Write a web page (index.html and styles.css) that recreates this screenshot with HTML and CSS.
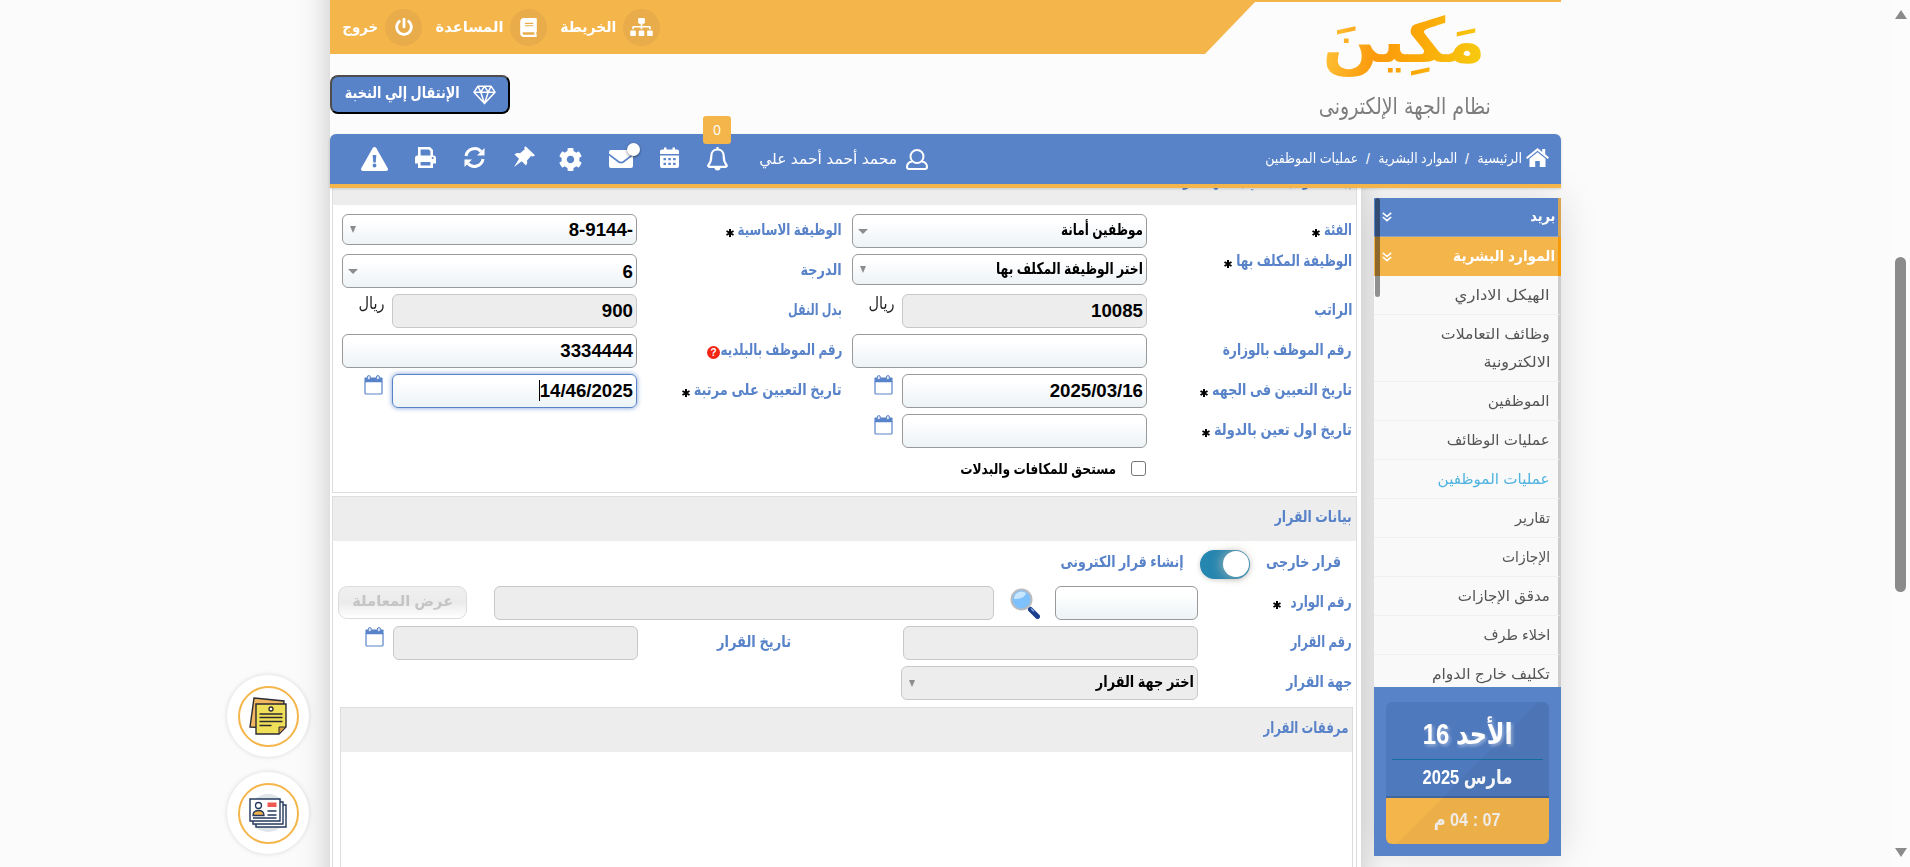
FILE: index.html
```html
<!DOCTYPE html>
<html lang="ar">
<head>
<meta charset="utf-8">
<title>مكين</title>
<link rel="stylesheet" href="styles.css">
</head>
<body>
<svg width="0" height="0" class="defs">
  <defs>
    <symbol id="i-cal" viewBox="0 0 19 21" preserveAspectRatio="none"><path d="M1 7v12q0 1 1 1h15q1 0 1-1V7z" fill="#fff" stroke="#5983c9" stroke-width="1.200"/><path d="M.5 6.800V3.500Q.5 2.500 1.500 2.500H17.500q1 0 1 1v3.300z" fill="#5983c9"/><rect x="3.300" y=".6" width="3" height="4.400" rx="1.500" fill="#dbe6f7" stroke="#5983c9"/><rect x="12.400" y=".6" width="3" height="4.400" rx="1.500" fill="#dbe6f7" stroke="#5983c9"/></symbol>
    <symbol id="i-star" viewBox="0 0 8 8"><path d="M4 0v8M.5 2l7 4M7.500 2l-7 4" stroke="#000" stroke-width="2"/></symbol>
    <symbol id="i-chev" viewBox="0 0 10 10"><path d="M.8.8L5 4.500 9.200.8M.8 5L5 8.700 9.200 5" fill="none" stroke="#fff" stroke-width="1.600"/></symbol>
  </defs>
</svg>
<div class="page" dir="rtl">
  <div class="wrap">
    <header class="header">
      <div class="head-top">
        <div class="logo">
          <div class="logo-name"><span class="fit" data-w="163">مَكِينَ</span></div>
          <div class="logo-sub"><span class="fit" data-w="172">نظام الجهة الإلكترونى</span></div>
        </div>
        <div class="head-left">
          <nav class="topnav">
            <a class="tn"><i class="disc"><svg width="23" height="18" viewBox="0 0 640 512"><path fill="#fff" d="M128 352H32c-17.670 0-32 14.330-32 32v96c0 17.670 14.330 32 32 32h96c17.670 0 32-14.330 32-32v-96c0-17.670-14.330-32-32-32zm-24-80h192v48h48v-48h192v48h48v-57.590c0-21.170-17.230-38.410-38.410-38.410H344v-64h40c17.670 0 32-14.330 32-32V32c0-17.670-14.330-32-32-32H256c-17.670 0-32 14.330-32 32v96c0 17.670 14.330 32 32 32h40v64H94.410C73.230 224 56 241.230 56 262.410V320h48v-48zm264 80h-96c-17.670 0-32 14.330-32 32v96c0 17.670 14.330 32 32 32h96c17.670 0 32-14.330 32-32v-96c0-17.670-14.330-32-32-32zm240 0h-96c-17.670 0-32 14.330-32 32v96c0 17.670 14.330 32 32 32h96c17.670 0 32-14.330 32-32v-96c0-17.670-14.330-32-32-32z"/></svg></i><span class="fit" data-w="56">الخريطة</span></a>
            <a class="tn"><i class="disc"><svg width="17" height="19" viewBox="0 0 448 512"><path fill="#fff" d="M448 360V24c0-13.300-10.700-24-24-24H96C43 0 0 43 0 96v320c0 53 43 96 96 96h328c13.300 0 24-10.700 24-24v-16c0-7.500-3.500-14.300-8.900-18.700-4.200-15.400-4.200-59.300 0-74.700 5.400-4.300 8.900-11.100 8.900-18.600zM128 134c0-3.300 2.700-6 6-6h212c3.300 0 6 2.700 6 6v20c0 3.300-2.700 6-6 6H134c-3.300 0-6-2.700-6-6v-20zm0 64c0-3.300 2.700-6 6-6h212c3.300 0 6 2.700 6 6v20c0 3.300-2.700 6-6 6H134c-3.300 0-6-2.700-6-6v-20zm253.400 250H96c-17.700 0-32-14.300-32-32 0-17.600 14.400-32 32-32h285.400c-1.900 17.100-1.900 46.900 0 64z"/></svg></i><span class="fit" data-w="68">المساعدة</span></a>
            <a class="tn"><i class="disc"><svg width="18" height="18" viewBox="0 0 512 512"><path fill="#fff" d="M400 54.100c63 45 104 118.600 104 201.900 0 136.800-110.800 247.700-247.500 248C120 504.300 8.200 393 8 256.400 7.900 173.100 48.900 99.300 111.800 54.200c11.700-8.300 28-4.800 35 7.700L162.600 90c5.900 10.500 3.100 23.800-6.600 31-41.500 30.800-68 79.600-68 134.900-.1 92.300 74.500 168.100 168 168.100 91.600 0 168.600-74.200 168-169.100-.3-51.800-24.700-101.800-68.100-134-9.700-7.200-12.400-20.500-6.500-30.900l15.800-28.100c7-12.400 23.200-16.100 34.800-7.800zM296 264V24c0-13.300-10.700-24-24-24h-32c-13.300 0-24 10.700-24 24v240c0 13.300 10.700 24 24 24h32c13.300 0 24-10.700 24-24z"/></svg></i><span class="fit" data-w="36">خروج</span></a>
          </nav>
          <div class="elite-row"><div class="elite"><svg width="23" height="20" viewBox="0 0 23 20"><path d="M5 1.200h13l4 6L11.500 18.600 1 7.200zM1 7.200h21M5 1.200l2.800 6 3.700 11.400 3.700-11.400 2.800-6M7.800 7.200l3.700-6 3.700 6" fill="none" stroke="#fff" stroke-width="1.500" stroke-linejoin="round"/></svg><span class="fit" data-w="115">الإنتقال إلي النخبة</span></div></div>
        </div>
      </div>
      <div class="bar" dir="ltr">
        <div class="tools">
          <i><svg width="27" height="24" viewBox="0 0 27 24"><path d="M13.500 0q1.200 0 1.900 1.200L26.600 21q1.200 3-1.600 3H2Q-.8 24 .4 21L11.600 1.200Q12.300 0 13.500 0z" fill="#fff"/><path d="M11.700 8h3.600l-.5 7.500h-2.600z" fill="#5983c9"/><circle cx="13.500" cy="18.500" r="1.900" fill="#5983c9"/></svg></i>
          <i class="raise"><svg width="21" height="21" viewBox="0 0 21 21"><path d="M4.300 9V1.300h10.200l2.200 2.200V9" fill="none" stroke="#fff" stroke-width="2.600"/><path d="M2.500 8.500h16Q21 8.500 21 11v5.500h-3v-2H3v2H0V11Q0 8.500 2.500 8.500z" fill="#fff"/><path d="M4.300 13.700h12.400v6H4.300z" fill="#5983c9" stroke="#fff" stroke-width="2.600"/><circle cx="17.700" cy="11" r="1" fill="#5983c9"/></svg></i>
          <i class="raise"><svg width="21" height="21" viewBox="0 0 21 21"><path d="M2 9A8.700 8.700 0 0 1 17 4.500M19 12A8.700 8.700 0 0 1 4 16.500" fill="none" stroke="#fff" stroke-width="3"/><path d="M20.500 1v7.500H13zM.5 20v-7.500H8z" fill="#fff"/></svg></i>
          <i class="raise"><svg width="22" height="22" viewBox="0 0 22 22"><path d="M12.500.3L22 9.300l-2 1.200-2-.5-4 4.500q1 3-1 5L8.700 15.200 1 21l5-8.200L1.500 8.500q2-2 5.500-1.200L11.800 3.200l-.6-1.400z" fill="#fff"/></svg></i>
          <i><svg width="23" height="23" viewBox="8 8 496 496"><path fill="#fff" d="M487.400 315.700l-42.600-24.600c4.300-23.200 4.300-47 0-70.200l42.600-24.600c4.900-2.800 7.100-8.600 5.500-14-11.100-35.600-30-67.800-54.700-94.600-3.800-4.100-10-5.100-14.800-2.300L380.800 110c-17.900-15.400-38.500-27.300-60.800-35.100V25.800c0-5.600-3.900-10.500-9.400-11.700-36.700-8.200-74.300-7.800-109.200 0-5.500 1.200-9.400 6.100-9.400 11.700V75c-22.200 7.900-42.800 19.800-60.800 35.100L88.700 85.500c-4.900-2.800-11-1.900-14.800 2.300-24.700 26.700-43.600 58.900-54.700 94.600-1.700 5.400.6 11.200 5.500 14L67.300 221c-4.300 23.200-4.300 47 0 70.200l-42.600 24.600c-4.900 2.800-7.100 8.600-5.500 14 11.100 35.600 30 67.800 54.700 94.600 3.800 4.100 10 5.100 14.800 2.300l42.600-24.600c17.900 15.400 38.500 27.300 60.800 35.100v49.200c0 5.600 3.900 10.500 9.400 11.700 36.700 8.200 74.300 7.800 109.200 0 5.500-1.200 9.400-6.100 9.400-11.700v-49.200c22.200-7.900 42.800-19.800 60.800-35.100l42.600 24.600c4.900 2.800 11 1.900 14.800-2.300 24.700-26.700 43.600-58.900 54.700-94.600 1.500-5.500-.7-11.300-5.600-14.100zM256 336c-44.100 0-80-35.900-80-80s35.900-80 80-80 80 35.900 80 80-35.900 80-80 80z"/></svg></i>
          <i class="mail"><svg width="24" height="18" viewBox="0 0 24 18"><path d="M0 2Q0 0 2 0h20q2 0 2 2v1.500L14 11q-2 1.500-4 0L0 3.500zM0 5.500L9 12.500q3 2 6 0L24 5.500V16q0 2-2 2H2q-2 0-2-2z" fill="#fff"/></svg><b class="dot"></b></i>
          <i class="raise"><svg width="19" height="21" viewBox="0 0 19 21"><path d="M0 7V4.500Q0 2.500 2 2.500h2V.5h2.500v2h6v-2H15v2h2q2 0 2 2V7zM0 8.500h19V19q0 2-2 2H2q-2 0-2-2z" fill="#fff"/><path d="M3.500 11h2.500v2.300H3.500zm4.800 0h2.500v2.300H8.300zm4.800 0h2.500v2.300h-2.500zM3.500 15.700h2.500V18H3.500zm4.800 0h2.500V18H8.300zm4.800 0h2.500V18h-2.500z" fill="#5983c9"/></svg></i>
          <i class="bell"><svg width="21" height="24" viewBox="0 0 21 24"><path d="M10.500 2.500c-4 0-6.200 3-6.200 6.500 0 6-1.500 7.300-2.800 9-.6 1 0 1.800.8 1.800h16.400c.8 0 1.400-.8.8-1.800-1.300-1.700-2.800-3-2.800-9 0-3.500-2.200-6.500-6.200-6.500zM10.500 0v2.500" fill="none" stroke="#fff" stroke-width="2.200"/><path d="M7.500 20.500a3 3 0 0 0 6 0z" fill="#fff"/></svg><b class="count">0</b></i>
        </div>
        <div class="user"><span class="fit" dir="rtl" data-w="138">محمد أحمد أحمد علي</span><svg width="22" height="21" viewBox="0 0 22 21"><circle cx="11" cy="7.500" r="6.500" fill="none" stroke="#fff" stroke-width="2"/><path d="M6 12.500Q1 13.500 1 18q0 2 2 2h16q2 0 2-2 0-4.500-5-5.500" fill="none" stroke="#fff" stroke-width="2"/></svg></div>
        <div class="crumbs" dir="rtl"><svg width="23" height="19" viewBox="0 0 23 19"><path d="M11.500 0l4.700 3.900V1h3v5.300L23 9.500l-1.300 1.500L11.500 2.700 1.300 11 0 9.500z" fill="#fff"/><path d="M3.500 10.800l8-6.500 8 6.500V19h-5.700v-6H9.200v6H3.500z" fill="#fff"/></svg><span class="fit" data-w="45">الرئيسية</span><u>/</u><span class="fit" data-w="79">الموارد البشرية</span><u>/</u><span class="fit" data-w="93">عمليات الموظفين</span></div>
      </div>
    </header>

    <div class="body">
      <aside class="side">
        <div class="menu">
          <div class="group mail-g"><span class="fit" data-w="25">بريد</span><svg width="10" height="10"><use href="#i-chev"/></svg></div>
          <div class="group hr-g"><span class="fit" data-w="102">الموارد البشرية</span><svg width="10" height="10"><use href="#i-chev"/></svg></div>
          <div class="item"><span class="fit" data-w="95">الهيكل الاداري</span></div>
          <div class="item"><span class="fit" data-w="109">وظائف التعاملات</span><br><span class="fit" data-w="67">الالكترونية</span></div>
          <div class="item"><span class="fit" data-w="62">الموظفين</span></div>
          <div class="item"><span class="fit" data-w="103">عمليات الوظائف</span></div>
          <div class="item on"><span class="fit" data-w="112">عمليات الموظفين</span></div>
          <div class="item"><span class="fit" data-w="35">تقارير</span></div>
          <div class="item"><span class="fit" data-w="48">الإجازات</span></div>
          <div class="item"><span class="fit" data-w="92">مدقق الإجازات</span></div>
          <div class="item"><span class="fit" data-w="67">اخلاء طرف</span></div>
          <div class="item"><span class="fit" data-w="118">تكليف خارج الدوام</span></div>
          <b class="menu-thumb"></b>
        </div>
        <div class="clock">
          <div class="card">
            <div class="day"><span class="fit" data-w="90">الأحد 16</span></div>
            <div class="month"><span class="fit" data-w="90">مارس 2025</span></div>
            <div class="time"><span class="fit" data-w="67">07 : 04 م</span></div>
          </div>
        </div>
      </aside>

      <main class="main">
        <section class="panel first">
          <h2 class="title"><span class="fit" data-w="192">بيانات الوظيفة التي يشغلها الموظف</span></h2>
          <div class="form">
            <label><span class="fit" data-w="28">الفئة</span><svg class="star"><use href="#i-star"/></svg></label>
            <div class="ctl"><div class="box sel wide"><span class="fit" data-w="82">موظفين أمانة</span></div></div>
            <label><span class="fit" data-w="104">الوظيفة الاساسية</span><svg class="star"><use href="#i-star"/></svg></label>
            <div class="ctl"><div class="box sel tall short"><span dir="ltr">8-9144-</span></div></div>

            <label class="up"><span class="fit" data-w="116">الوظيفة المكلف بها</span><svg class="star"><use href="#i-star"/></svg></label>
            <div class="ctl"><div class="box sel tall short"><span class="fit" data-w="147">اختر الوظيفة المكلف بها</span></div></div>
            <label><span class="fit" data-w="41">الدرجة</span></label>
            <div class="ctl"><div class="box sel wide"><span>6</span></div></div>

            <label><span class="fit" data-w="38">الراتب</span></label>
            <div class="ctl"><div class="box off"><span>10085</span></div><div class="unit"><span class="fit" data-w="26">ريال</span></div></div>
            <label><span class="fit" data-w="54">بدل النقل</span></label>
            <div class="ctl"><div class="box off"><span>900</span></div><div class="unit"><span class="fit" data-w="26">ريال</span></div></div>

            <label><span class="fit" data-w="129">رقم الموظف بالوزارة</span></label>
            <div class="ctl"><div class="box"></div></div>
            <label><span class="fit" data-w="122">رقم الموظف بالبلديه</span><b class="help">?</b></label>
            <div class="ctl"><div class="box"><span>3334444</span></div></div>

            <label><span class="fit" data-w="140">تاريخ التعيين فى الجهه</span><svg class="star"><use href="#i-star"/></svg></label>
            <div class="ctl"><div class="box"><span>2025/03/16</span></div><svg class="cal"><use href="#i-cal"/></svg></div>
            <label><span class="fit" data-w="148">تاريخ التعيين على مرتبة</span><svg class="star"><use href="#i-star"/></svg></label>
            <div class="ctl"><div class="box focus"><span class="caret" dir="ltr">14/46/2025</span></div><svg class="cal"><use href="#i-cal"/></svg></div>

            <label><span class="fit" data-w="138">تاريخ اول تعين بالدولة</span><svg class="star"><use href="#i-star"/></svg></label>
            <div class="ctl"><div class="box"></div><svg class="cal"><use href="#i-cal"/></svg></div>
            <label></label><div class="ctl"></div>

            <label></label>
            <div class="ctl check"><b class="cb"></b><span class="fit" data-w="156">مستحق للمكافات والبدلات</span></div>
          </div>
        </section>

        <section class="panel second">
          <h2 class="title"><span class="fit" data-w="77">بيانات القرار</span></h2>
          <div class="switch-row"><span class="fit" data-w="75">قرار خارجى</span><b class="switch"><b></b></b><span class="fit" data-w="123">إنشاء قرار الكترونى</span></div>
          <div class="row">
            <label><span class="fit" data-w="61">رقم الوارد</span><svg class="star far"><use href="#i-star"/></svg></label>
            <div class="box w143"></div>
            <svg class="mag" width="30" height="31" viewBox="0 0 30 31"><path d="M18.500 19.500l3 3" stroke="#9a9a9a" stroke-width="3"/><path d="M20.500 21.500l7 7" stroke="#1c3f8f" stroke-width="5" stroke-linecap="round"/><path d="M21 20.500l3 3" stroke="#7fa3dd" stroke-width="1.500"/><circle cx="11.500" cy="11.500" r="10" fill="#7dc0fb" stroke="#b9bcc0" stroke-width="2"/><path d="M4 11a7.500 7.500 0 0 1 12-6Q15 11 4 11z" fill="#c9e6ff"/></svg>
            <div class="box off w500"></div>
            <div class="view"><span class="fit" data-w="101">عرض المعاملة</span></div>
          </div>
          <div class="row">
            <label><span class="fit" data-w="61">رقم القرار</span></label>
            <div class="box off w295"></div>
            <label class="mid"><span class="fit" data-w="74">تاريخ القرار</span></label>
            <div class="box off w245"></div>
            <svg class="cal"><use href="#i-cal"/></svg>
          </div>
          <div class="row">
            <label><span class="fit" data-w="66">جهة القرار</span></label>
            <div class="box off sel tall w297"><span class="fit" data-w="98">اختر جهة القرار</span></div>
          </div>
          <section class="panel third">
            <h2 class="title"><span class="fit" data-w="85">مرفقات القرار</span></h2>
          </section>
        </section>
      </main>
    </div>
  </div>
</div>
<div class="scroll"><i class="arrow up-a"></i><i class="thumb"></i><i class="arrow down-a"></i></div>
<div class="floats">
  <div class="fab"><div class="ring"><svg width="38" height="38" viewBox="0 0 38 38"><path d="M5 1l30 3-3 28-31-2z" fill="#f2b75f" stroke="#2b2b33" stroke-width="1.400"/><path d="M7 7h30v23l-7 7H7z" fill="#f0df58" stroke="#2b2b33" stroke-width="1.400"/><path d="M37 30h-7v7z" fill="#d79a3c" stroke="#2b2b33"/><path d="M10.500 17h23M10.500 20.500h23M10.500 24.500h23M10.500 28.500h12" stroke="#2b2b33" stroke-width="1.400"/><circle cx="22" cy="12" r="2" fill="#fff" stroke="#2b2b33" stroke-width="1.300"/></svg></div></div>
  <div class="fab"><div class="ring"><svg width="38" height="38" viewBox="0 0 38 38"><circle cx="19" cy="19" r="19" fill="#dfe5e8"/><path d="M7 11h30v22H7z" fill="#fff" stroke="#24395c" stroke-width="1.400"/><path d="M4 8h30v22H4z" fill="#fff" stroke="#24395c" stroke-width="1.400"/><path d="M1 5h30v22H1z" fill="#fff" stroke="#24395c" stroke-width="1.400"/><circle cx="9.500" cy="11.500" r="3" fill="#fff" stroke="#24395c" stroke-width="1.300"/><path d="M4 21.500q0-5 5.500-5t5.500 5z" fill="#f0b14b" stroke="#24395c" stroke-width="1.300"/><path d="M18.500 8.500h9v4.500h-9z" fill="#ee5a52"/><path d="M18.500 17h9M18.500 21h9M4 24h23.500" stroke="#24395c" stroke-width="1.300"/></svg></div></div>
</div>
<script src="fit.js"></script>
</body>
</html>
```
FILE: styles.css
```css
* { box-sizing: border-box; }
body {
  margin: 0;
  width: 1910px;
  height: 867px;
  overflow: hidden;
  display: flex;
  background: #fbfbfb;
  font-family: "Liberation Sans", "DejaVu Sans", sans-serif;
}
i, u, a { font-style: normal; text-decoration: none; }
svg { display: block; flex: none; }
.defs { position: absolute; }
.fit { display: inline-block; white-space: nowrap; transform-origin: right center; flex: none; }

.page { width: 1891px; height: 867px; overflow: hidden; flex: none; }
.wrap { width: 1231px; margin: 0 auto; }

/* header */
.header { position: relative; z-index: 3; height: 188px; background: #fcfcfc; }
.head-top { display: flex; height: 134px; }
.logo { width: 356px; border-top: 2px solid #f4b54b; padding-right: 70px; flex: none; }
.logo-name { height: 84px; line-height: 78px; padding-right: 5px; font-family: "DejaVu Sans", sans-serif; font-size: 62px; font-weight: bold; }
.logo-name .fit { background: linear-gradient(100deg, #ffc83d, #fb9a0c 35%, #fba908 60%, #f6cf10); background-clip: text; -webkit-background-clip: text; color: transparent; }
.logo-sub { height: 46px; line-height: 40px; font-family: "DejaVu Sans", sans-serif; font-size: 23px; color: #7d7d7d; }
.head-left { flex: 1; }
.topnav {
  height: 54px;
  margin-right: -50px;
  padding-left: 12px;
  display: flex;
  justify-content: flex-end;
  align-items: center;
  gap: 13px;
  background: #f4b54b;
  clip-path: polygon(0 0, 100% 0, 100% 2px, 875px 100%, 0 100%);
}
.tn { display: flex; align-items: center; gap: 7px; color: #fff; font-weight: bold; font-size: 15px; }
.disc { width: 37px; height: 37px; border-radius: 50%; background: #e8ac4b; display: flex; align-items: center; justify-content: center; }
.elite-row { display: flex; justify-content: flex-end; padding-top: 21px; }
.elite {
  width: 180px;
  height: 39px;
  border: 2px solid #000;
  border-top-color: #4d4d4d;
  border-left-color: #4d4d4d;
  border-radius: 8px;
  background: #5983c9;
  color: #fff;
  font-weight: bold;
  font-size: 16px;
  display: flex;
  align-items: center;
  padding-right: 12px;
  gap: 13px;
}
.elite .fit { margin-top: -4px; }
.bar {
  height: 54px;
  background: #5983c9;
  border-bottom: 4px solid #f4b54b;
  border-radius: 6px 6px 0 0;
  box-shadow: 0 1px 3px rgba(0, 0, 0, .15);
  display: flex;
  align-items: center;
  color: #fff;
}
.tools { display: grid; grid-template-columns: 49px 53px 45px 54px 38px 64px 33px 62px; padding-left: 20px; align-items: center; }
.tools i { display: flex; justify-content: center; align-items: center; height: 46px; position: relative; }
.tools .raise { padding-bottom: 4px; }
.dot { position: absolute; left: 38px; top: 7px; width: 13px; height: 13px; border-radius: 50%; background: #fff; box-shadow: 0 1px 3px rgba(0, 0, 0, .5); }
.count { position: absolute; left: 17px; top: -20px; width: 28px; height: 28px; border-radius: 3px; background: #f4b54b; font: 14px/28px "Open Sans", sans-serif; text-align: center; }
.user { display: flex; align-items: center; gap: 9px; padding-left: 11px; font-size: 15px; }
.crumbs { flex: 1; display: flex; align-items: center; padding-right: 12px; gap: 4px; font-size: 14px; }
.crumbs .fit, .crumbs svg { margin-top: -3px; }
.crumbs u { width: 12px; text-align: center; }

/* sidebar */
.body { display: flex; gap: 13px; }
.side { width: 187px; flex: none; margin-top: 10px; height: 658px; box-shadow: 0 0 36px rgba(0, 0, 0, .13); }
.menu { position: relative; height: 489px; overflow: hidden; background: #f9f9f9; }
.group { display: flex; align-items: center; justify-content: space-between; height: 39px; padding: 0 3px 0 8px; border-right: 3px solid #f79a08; color: #fff; font-weight: bold; font-size: 15px; background: #f4b54b; }
.mail-g { background: #5983c9; border-right-color: #d9a452; border-bottom: 1px solid #8fa3c0; }
.group .fit { margin-top: -2px; }
.item { padding: 5px 8px 5px 0; line-height: 28px; border-right: 3px solid #ccc; border-bottom: 1px solid #f0f0f0; color: #555; font-size: 15px; }
.item.on { color: #4fb3e0; }
.menu-thumb { position: absolute; left: 1px; top: 0; width: 5px; height: 99px; border-radius: 3px; background: rgba(0, 0, 0, .42); }
.clock { height: 169px; background: #5983c9; padding: 15px 12px 12px; position: relative; }
.card { position: relative; height: 142px; border-radius: 6px; overflow: hidden; background: #4f79bd; color: #fff; font-weight: bold; text-align: center; }
.card::after { content: ""; position: absolute; inset: 0; background: linear-gradient(135deg, transparent 50%, rgba(0, 0, 0, .035) 50%); }
.card .fit { transform-origin: center; }
.day { height: 58px; margin: 0 6px; border-bottom: 1px solid #10719e; font-size: 29px; line-height: 64px; text-shadow: 2px 2px 4px rgba(255, 255, 255, .4); }
.month { height: 38px; line-height: 35px; font-size: 20px; border-bottom: 2px solid #41659f; }
.time { height: 46px; line-height: 44px; font-size: 18px; background: #f4b54b; color: #f8f4f0; }

/* content */
.main { width: 1031px; height: 1400px; margin-top: -400px; flex: none; background: #fff; padding: 372px 4px 0 2px; box-shadow: 0 0 30px rgba(0, 0, 0, .22); }
.panel { border: 1px solid #ddd; background: #fff; }
.title { margin: 0; height: 44px; line-height: 40px; padding-right: 4px; background: #ededed; color: #5983c9; font-size: 15.500px; font-weight: bold; }
.first { height: 333px; margin-bottom: 3px; }
.form { display: grid; grid-template-columns: 205px 295px 215px 295px; grid-auto-rows: 40px; padding: 9px 4px 0 0; color: #000; }
.form label:nth-child(4n + 3) { padding-right: 10px; }
label { display: flex; align-items: center; gap: 4px; height: 31px; color: #5983c9; font-weight: bold; font-size: 15.500px; }
label.up { height: 13px; }
.star { width: 8px; height: 8px; margin-top: 7px; }
.star.far { margin-right: 6px; }
.help { width: 13px; height: 13px; border-radius: 50%; background: #f22613; color: #fff; font: bold 10px/13px "Liberation Sans", sans-serif; text-align: center; margin: 5px -4px 0 0; }
.ctl { display: flex; }
.box {
  flex: none;
  width: 245px;
  height: 34px;
  border: 1px solid #999;
  border-radius: 6px;
  background: linear-gradient(#fff 20%, #edf3f6);
  padding: 0 3px;
  line-height: 31px;
  font-size: 18.670px;
  font-weight: bold;
  color: #000;
}
.box .fit { font-size: 16px; line-height: 28px; margin-top: -2px; }
.ctl .box:last-child { width: 295px; }
.box.off { background: #ededed; border-color: #c8c8c8; }
.box.short { height: 31px; line-height: 29px; }
.box.focus { border-color: #5983c9; box-shadow: 0 0 5px rgba(89, 131, 201, .8); }
.caret { border-left: 1px solid #000; display: inline-block; line-height: 21px; }
.sel { display: flex; justify-content: space-between; align-items: center; padding-left: 5px; }
.sel::after { content: ""; border: 5px solid transparent; border-top: 5px solid #8c8c8c; border-bottom: 0; }
.sel.tall::after { border-width: 7px 3.500px 0; margin-left: 2px; }
.unit { width: 50px; padding-right: 8px; line-height: 20px; font-size: 17px; color: #222; }
.cal { width: 19px; height: 20px; margin: 1px 9px 0 0; align-self: flex-start; }
.check { align-items: center; height: 29px; gap: 15px; padding-right: 1px; font-weight: bold; font-size: 15px; }
.cb { width: 15px; height: 15px; border: 1px solid #767676; border-radius: 3px; background: #fff; }

.second { height: 400px; }
.switch-row { display: flex; align-items: center; height: 45px; padding: 2px 15px 0 0; gap: 16px; color: #5983c9; font-weight: bold; font-size: 15.500px; }
.switch-row .fit { margin-top: -5px; }
.switch { width: 50px; height: 29px; border-radius: 15px; background: #2586b0; padding: 1px; box-shadow: 0 1px 5px rgba(0, 0, 0, .2); }
.switch b { display: block; width: 26px; height: 26px; border-radius: 50%; background: #fff; box-shadow: -2px 0 12px rgba(200, 190, 180, .7); }
.row { display: flex; height: 40px; padding-right: 4px; }
.row label { width: 154px; }
.row label.mid { width: 265px; padding-right: 112px; }
.w143 { width: 143px; }
.w295 { width: 295px; }
.w297 { width: 297px; }
.w500 { width: 500px; }
.mag { margin: 2px 15px 0 16px; }
.view { width: 129px; height: 33px; margin-right: 27px; border: 1px solid #ddd; border-radius: 9px; background: linear-gradient(#f0f0f0, #ebebeb 50%, #fff); text-align: center; line-height: 28px; font-size: 15px; font-weight: bold; color: #c4c4c4; flex: none; }
.view .fit { transform-origin: center; }
.third { margin: 1px 3px 0 7px; height: 200px; }

/* page scrollbar */
.scroll { width: 19px; display: flex; flex-direction: column; align-items: center; background: #fcfcfc; flex: none; padding: 10px 0; }
.thumb { width: 11px; height: 335px; border-radius: 6px; background: #8b8b8b; margin-top: 238px; }
.arrow { border: 6px solid transparent; }
.up-a { border-bottom: 9px solid #8b8b8b; border-top: 0; }
.down-a { border-top: 9px solid #8b8b8b; border-bottom: 0; margin-top: auto; }

/* floating shortcuts */
.floats { position: absolute; left: 227px; top: 675px; display: flex; flex-direction: column; gap: 15px; }
.fab { width: 82px; height: 82px; border-radius: 50%; background: #fff; box-shadow: 0 0 5px rgba(0, 0, 0, .14); display: flex; align-items: center; justify-content: center; }
.ring { width: 61px; height: 61px; border: 2px solid #f4b54b; border-radius: 50%; display: flex; align-items: center; justify-content: center; }
```
FILE: fit.js
```js
// Condense or widen each label to its design width.
document.querySelectorAll(".fit").forEach(function (el) {
  var target = parseFloat(el.dataset.w);
  var natural = el.getBoundingClientRect().width;
  var centered = getComputedStyle(el.parentNode).textAlign === "center";
  el.style.transform = "scaleX(" + target / natural + ")";
  if (!centered) el.style.marginLeft = target - natural + "px";
});
```
